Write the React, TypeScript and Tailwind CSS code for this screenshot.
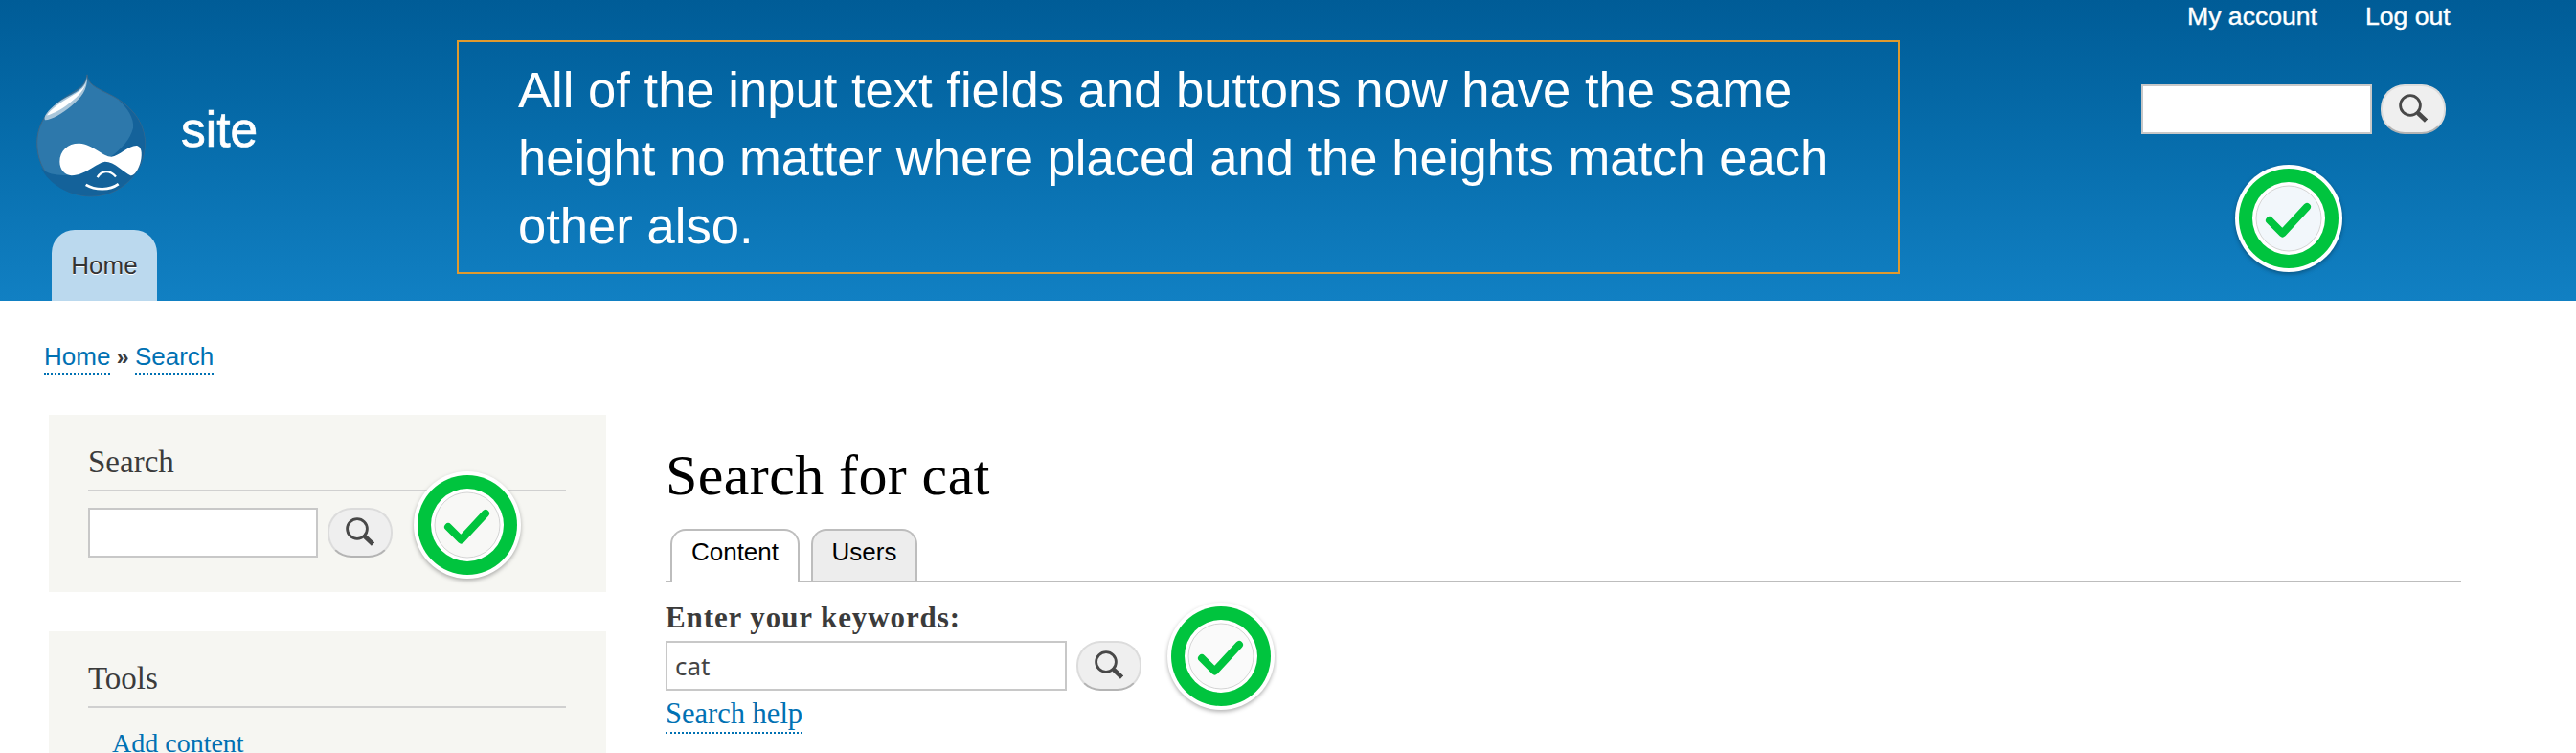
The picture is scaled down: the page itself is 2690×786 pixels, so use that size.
import React from "react";

function SearchIcon() {
  return (
    <svg width="30" height="30" viewBox="0 0 30 30" fill="none" aria-hidden="true">
      <circle cx="12" cy="12" r="10.4" stroke="#484848" strokeWidth="2.8" />
      <path d="M18.5 18.5 L21 21" stroke="#484848" strokeWidth="2.6" />
      <path d="M20 20 L28.5 28" stroke="#484848" strokeWidth="4.6" />
    </svg>
  );
}

function SearchButton() {
  return (
    <button className="w-[68px] h-[52px] shrink-0 flex items-center justify-center rounded-[25px] bg-[#efefef] border-2 border-[#dcdcdc] border-b-[#b4b4b4] pb-[2px]">
      <SearchIcon />
    </button>
  );
}

function Badge({ className, inner }: { className: string; inner: string }) {
  return (
    <svg
      className={`absolute drop-shadow-[0_2px_2px_rgba(0,0,0,0.3)] ${className}`}
      width="112"
      height="112"
      viewBox="0 0 112 112"
      aria-hidden="true"
    >
      <circle cx="56" cy="56" r="56" fill="#ffffff" />
      <circle cx="56" cy="56" r="52" fill="#00c43e" />
      <circle cx="56" cy="56" r="38" fill="#ffffff" />
      <circle cx="56" cy="56" r="34" fill={inner} stroke="#d4d4d4" strokeWidth="1" />
      <path
        d="M36 58 L49.5 71.5 L75 44"
        fill="none"
        stroke="#00c43e"
        strokeWidth="8"
        strokeLinecap="round"
        strokeLinejoin="round"
      />
    </svg>
  );
}

function Logo() {
  return (
    <svg width="114" height="129" viewBox="115 230 342 386" className="shrink-0" aria-hidden="true">
      <path
        d="M274 232 C276 262 300 272 340 292 C410 325 455 380 455 447 C455 540 380 613 286 613 C192 613 117 540 117 447 C117 380 160 330 210 300 C245 278 272 265 274 232 Z"
        fill="#2d78ab"
        stroke="#3d6788"
        strokeWidth="3"
      />
      <path
        d="M372 312 C420 340 455 390 455 447 C455 540 380 613 286 613 C215 613 155 575 130 525 C160 552 200 548 240 545 C310 520 400 470 418 400 C422 370 400 335 372 312 Z"
        fill="#14629a"
      />
      <path
        d="M274 238 C276 280 255 305 225 330 C195 355 160 375 142 374 C136 365 150 345 180 322 C220 292 268 285 274 238 Z"
        fill="#a9c6da"
      />
      <path
        d="M274 238 C272 275 250 285 215 305 C190 320 160 340 148 360 C170 355 205 335 230 312 C255 292 272 270 274 238 Z"
        fill="#ffffff"
      />
      <path
        d="M188 505 C188 470 215 447 250 448 C290 450 325 490 350 490 C375 488 405 452 432 455 C448 460 446 490 440 510 C432 535 420 550 410 548 C390 540 360 505 330 505 C300 510 270 548 225 548 C205 548 188 530 188 505 Z"
        fill="#ffffff"
      />
      <path d="M306 554 C320 530 345 530 364 552" fill="none" stroke="#ffffff" strokeWidth="7" />
      <path d="M270 577 C300 595 345 595 372 575" fill="none" stroke="#ffffff" strokeWidth="8" />
    </svg>
  );
}

function Dotted({ children }: { children: React.ReactNode }) {
  return <a className="text-[#0071b3] border-b-2 border-dotted border-[#0071b3] pb-[2px]">{children}</a>;
}

function Panel({ title, children }: { title: string; children: React.ReactNode }) {
  return (
    <section className="w-[582px] bg-[#f6f6f2] pl-[41px] pr-[42px] pt-[29px] pb-[36px]">
      <h2 className="text-[33px] leading-[40px] text-[#3b3b3b] pb-[9px] border-b-2 border-[#d0d0d0]">{title}</h2>
      {children}
    </section>
  );
}

export default function App() {
  return (
    <div className="relative w-[2690px] h-[786px] overflow-hidden bg-white font-['Liberation_Serif',serif]">
      <header className="h-[314px] flex bg-gradient-to-b from-[#005c97] to-[#1180c3] font-['Liberation_Sans',sans-serif]">
        <div className="w-[477px] shrink-0 pl-[38px] pt-[77px] flex flex-col">
          <div className="flex gap-[37px] items-start h-[128px]">
            <Logo />
            <span className="mt-[28px] text-[51.5px] leading-[60px] text-white [-webkit-text-stroke:0.7px_white]">
              site
            </span>
          </div>
          <a className="mt-[35px] ml-[16px] w-[110px] h-[74px] flex justify-center pt-[19px] rounded-t-[24px] bg-[#bbd9ee] text-[26px] leading-[36px] text-[#333] [text-shadow:0_1px_0_#fff]">
            Home
          </a>
        </div>

        <div className="mt-[42px] w-[1507px] h-[244px] shrink-0 border-2 border-[#e09a2e] pl-[62px] pt-[14px]">
          <p className="w-[1420px] text-[52.6px] leading-[71px] text-white">
            All of the input text fields and buttons now have the same height no matter where placed and the heights
            match each other also.
          </p>
        </div>

        <div className="ml-[252px] w-[330px]">
          <nav className="pl-[48px] pt-[1px] flex gap-[50px] text-[26.6px] leading-[32px] text-white [-webkit-text-stroke:0.4px_white]">
            <a>My account</a>
            <a>Log out</a>
          </nav>
          <div className="mt-[55px] flex gap-[9px]">
            <input className="w-[241px] h-[52px] bg-white border-2 border-[#c8c8c8]" readOnly />
            <SearchButton />
          </div>
        </div>
      </header>

      <div className="pl-[46px] pt-[40px] text-[26px] leading-[36px] text-[#3b3b3b] font-['Liberation_Sans',sans-serif]">
        <Dotted>Home</Dotted>
        <span className="text-[23px] font-bold"> » </span>
        <Dotted>Search</Dotted>
      </div>

      <main className="mt-[42px] ml-[51px] flex gap-[62px]">
        <aside className="w-[582px] shrink-0 flex flex-col gap-[41px]">
          <Panel title="Search">
            <div className="mt-[17px] flex gap-[10px]">
              <input className="w-[240px] h-[52px] bg-white border-2 border-[#c8c8c8]" readOnly />
              <SearchButton />
            </div>
          </Panel>
          <Panel title="Tools">
            <ul className="mt-[19px] pl-[25px] text-[28px] leading-[36px] text-[#0071b3]">
              <li>Add content</li>
            </ul>
          </Panel>
        </aside>

        <article className="w-[1875px] pt-[31px]">
          <h1 className="text-[60px] leading-[64px] tracking-[0.4px] text-black">Search for cat</h1>
          <div className="mt-[24px] pl-[5px] flex gap-[12px] h-[56px] border-b-2 border-[#bdbdbd] font-['Liberation_Sans',sans-serif] text-[26px] leading-[36px] text-black">
            <a className="w-[135px] h-[56px] flex justify-center pt-[4px] rounded-t-[16px] border-2 border-b-0 border-[#bdbdbd] bg-white">
              Content
            </a>
            <a className="w-[111px] h-[54px] flex justify-center pt-[4px] rounded-t-[16px] border-2 border-b-0 border-[#bdbdbd] bg-[#ededed]">
              Users
            </a>
          </div>
          <label className="block mt-[19px] text-[31px] leading-[36px] font-bold tracking-[0.9px] text-[#3b3b3b]">
            Enter your keywords:
          </label>
          <div className="mt-[6px] flex gap-[10px]">
            <input
              className="w-[419px] h-[52px] bg-white border-2 border-[#c8c8c8] px-[8px] text-[26px] text-[#444] font-['Noto_Sans',sans-serif]"
              value="cat"
              readOnly
            />
            <SearchButton />
          </div>
          <div className="mt-[6px] text-[30.5px] leading-[36px]">
            <Dotted>Search help</Dotted>
          </div>
        </article>
      </main>

      <Badge className="left-[2334px] top-[172px]" inner="#f2f7fb" />
      <Badge className="left-[432px] top-[492px]" inner="#f8f8f6" />
      <Badge className="left-[1219px] top-[629px]" inner="#fafafa" />
    </div>
  );
}
